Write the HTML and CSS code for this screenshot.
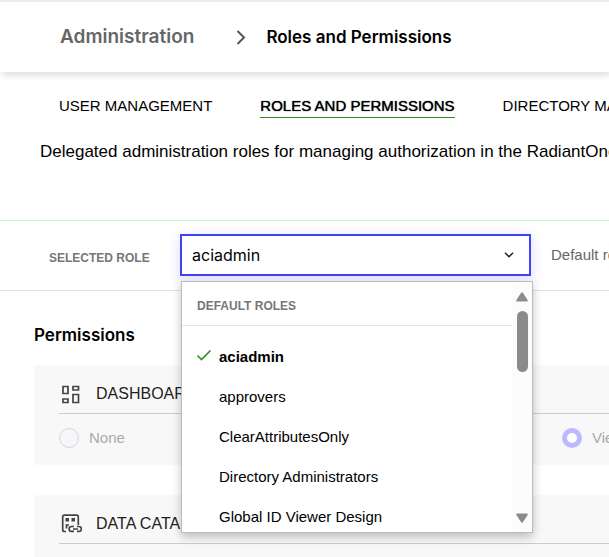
FILE: index.html
```html
<!DOCTYPE html>
<html lang="en">
<head>
<meta charset="utf-8">
<meta name="viewport" content="width=device-width, initial-scale=1">
<title>Roles and Permissions</title>
<link rel="stylesheet" href="styles.css">
</head>
<body>
<header class="topbar">
  <nav class="crumbs" aria-label="Breadcrumb">
    <a class="crumb-parent" href="#admin">Administration</a>
    <svg class="crumb-arrow" viewBox="0 0 10 16" aria-hidden="true"><path d="M1.500 2 8 8.500 1.500 15"/></svg>
    <h1 class="crumb-current">Roles and Permissions</h1>
  </nav>
</header>

<nav class="tabs" aria-label="Administration sections">
  <a class="tab" href="#users">USER MANAGEMENT</a>
  <a class="tab active" href="#roles" aria-current="page">ROLES AND PERMISSIONS</a>
  <a class="tab" href="#directory">DIRECTORY MANAGER</a>
</nav>

<main>
  <p class="intro">Delegated administration roles for managing authorization in the RadiantOne</p>

  <section class="role-bar">
    <label class="role-label" for="role">SELECTED ROLE</label>
    <div class="picker">
      <select class="picker-box" id="role">
        <option>aciadmin</option>
        <option>approvers</option>
        <option>ClearAttributesOnly</option>
        <option>Directory Administrators</option>
        <option>Global ID Viewer Design</option>
      </select>
      <svg class="picker-arrow" viewBox="0 0 10 6" aria-hidden="true"><path d="M1 .8 5 4.800 9 .8"/></svg>
      <div class="menu">
        <div class="menu-content">
          <h2 class="menu-title">DEFAULT ROLES</h2>
          <ul class="options">
            <li class="option selected"><svg class="check" viewBox="0 0 16 12" aria-hidden="true"><path d="M1.500 6.500 5.500 10.500 14.500 1.500"/></svg>aciadmin</li>
            <li class="option">approvers</li>
            <li class="option">ClearAttributesOnly</li>
            <li class="option">Directory Administrators</li>
            <li class="option">Global ID Viewer Design</li>
          </ul>
        </div>
        <div class="scrollbar" aria-hidden="true">
          <svg class="scroll-arrow" viewBox="0 0 12 10"><path d="M6 1.200 10.800 8.500H1.200Z"/></svg>
          <div class="thumb"></div>
          <svg class="scroll-arrow" viewBox="0 0 12 10"><path d="M6 8.800 10.800 1.500H1.200Z"/></svg>
        </div>
      </div>
    </div>
    <p class="role-note">Default role</p>
  </section>

  <section class="permissions">
    <h2 class="section-title">Permissions</h2>
    <fieldset class="card">
      <div class="card-head">
        <svg class="card-icon" viewBox="0 0 22 20" aria-hidden="true"><path d="M3 2.500h5v7H3zM13 2.500h5.500v3.500H13zM3 15h5v3.500H3zM13 10.500h5.500v8H13z"/></svg>
        <h3 class="card-title">DASHBOARD</h3>
      </div>
      <div class="choices">
        <label class="choice"><input class="radio" type="radio" name="dashboard" disabled>None</label>
        <label class="choice"><input class="radio" type="radio" name="dashboard" checked disabled>View</label>
      </div>
    </fieldset>
    <fieldset class="card">
      <div class="card-head">
        <svg class="card-icon" viewBox="0 0 22 20" aria-hidden="true"><path d="M6 17.500H4.500q-1.800 0-1.800-1.800V3q0-1.800 1.800-1.800h12q1.800 0 1.800 1.800v8M6.500 14.500v-3.500h2.500M14 12.500h-2.500a2.400 2.400 0 0 0 0 4.800H14M17 12.500h2a2.400 2.400 0 0 1 0 4.800h-2M13 15h5"/><path class="solid" d="M5.500 4h3.500v3.500H5.500zM11.500 4H15v3.500h-3.500z"/></svg>
        <h3 class="card-title">DATA CATALOG</h3>
      </div>
      <div class="choices">
        <label class="choice"><input class="radio" type="radio" name="catalog" disabled>None</label>
        <label class="choice"><input class="radio" type="radio" name="catalog" checked disabled>View</label>
      </div>
    </fieldset>
  </section>
</main>
</body>
</html>
```
FILE: styles.css
```css
* { box-sizing: border-box; }

html { overflow: hidden; }

body {
  margin: 0;
  background: #fff;
  color: #000;
  font-family: "Liberation Sans", Arial, sans-serif;
  font-size: 15px;
  line-height: 20px;
}

h1, h2, h3, p, ul { margin: 0; }

a { color: inherit; text-decoration: none; }

.topbar {
  padding: 23px 60px;
  border-top: 2px solid #ececec;
  box-shadow: 2px 3px 7px rgba(0, 0, 0, .14);
}

.crumbs {
  display: flex;
  align-items: center;
  height: 24px;
}

.crumb-parent {
  color: #666;
  font-family: Inter, sans-serif;
  font-size: 19px;
  font-weight: 600;
}

.crumb-arrow {
  width: 10px;
  height: 16px;
  margin: 0 20px 0 42px;
  fill: none;
  stroke: #555;
  stroke-width: 2;
}

.crumb-current {
  font-family: Inter, sans-serif;
  font-size: 17px;
  font-weight: 600;
}

.tabs {
  display: flex;
  gap: 48px;
  padding: 23px 0 0 59px;
  white-space: nowrap;
}

.tab {
  padding-bottom: 1px;
  border-bottom: 1px solid transparent;
  line-height: 21px;
}

.tab.active {
  border-color: #2f8a1f;
  text-shadow: 0 0 1px #000;
}

.intro {
  padding: 24px 0 58px 40px;
  overflow: hidden;
  font-size: 17px;
  white-space: nowrap;
}

.role-bar {
  display: flex;
  align-items: flex-start;
  height: 71px;
  padding-top: 13px;
  border-top: 1px solid #cdf2cb;
  border-bottom: 1px solid #e2e2dc;
  line-height: 42px;
  white-space: nowrap;
}

.role-label {
  flex: 0 0 180px;
  padding: 3px 0 0 49px;
  color: #777;
  font-size: 12px;
  font-weight: 700;
}

.picker {
  position: relative;
  flex: 0 0 351px;
}

.picker-box {
  display: block;
  width: 100%;
  height: 42px;
  padding: 0 10px;
  appearance: none;
  border: 2px solid #4141f5;
  border-radius: 0;
  outline: none;
  background: #fff;
  box-shadow: 0 3px 10px 2px rgba(65, 65, 245, .14);
  color: #000;
  font-family: Inter, sans-serif;
  font-size: 16px;
}

.picker-arrow {
  position: absolute;
  top: 18px;
  right: 17px;
  width: 10px;
  height: 6px;
  fill: none;
  stroke: #222;
  stroke-width: 1.500;
  pointer-events: none;
}

.menu {
  position: absolute;
  z-index: 1;
  top: 47px;
  left: 1px;
  display: flex;
  width: 352px;
  height: 252px;
  border: 1px solid #bcbcbc;
  background: #fff;
  box-shadow: 0 4px 9px rgba(0, 0, 0, .24);
}

.menu-content { flex: 1; overflow: hidden; }

.menu-title {
  padding: 14px 15px 9px;
  border-bottom: 1px solid #e5e5e0;
  color: #777;
  font-size: 12px;
  font-weight: 700;
  line-height: 20px;
}

.options {
  padding: 11px 0 0;
  list-style: none;
}

.option {
  position: relative;
  padding-left: 37px;
  line-height: 40px;
}

.option.selected { font-weight: 700; }

.check {
  position: absolute;
  top: 12px;
  left: 14px;
  width: 16px;
  height: 12px;
  fill: none;
  stroke: #2f9120;
  stroke-width: 1.600;
}

.scrollbar {
  display: flex;
  flex: 0 0 20px;
  flex-direction: column;
  align-items: center;
  padding: 10px 0 9px;
  background: #fcfcfc;
}

.scroll-arrow {
  width: 14px;
  height: 10px;
  fill: #8b8b8b;
  stroke: #8b8b8b;
  stroke-width: 2;
  stroke-linejoin: round;
}

.thumb {
  width: 11px;
  height: 61px;
  margin: 9px 0 auto;
  border-radius: 6px;
  background: #8b8b8b;
}

.role-note { padding-left: 20px; color: #666; }

.permissions { padding: 34px 0 0 34px; }

.section-title {
  margin-bottom: 20px;
  font-family: Inter, sans-serif;
  font-size: 17px;
  font-weight: 600;
}

.card {
  height: 100px;
  margin: 0 0 30px;
  padding: 19px 0 0 25px;
  border: 0;
  border-radius: 4px 0 0 4px;
  background: #f8f8f8;
}

.card-head {
  display: flex;
  align-items: center;
  gap: 14px;
  height: 30px;
  padding-left: 1px;
  padding-bottom: 9px;
  border-bottom: 1px solid #ccc;
}

.card-icon {
  width: 22px;
  height: 20px;
  fill: none;
  stroke: #444;
  stroke-width: 1.700;
}

.solid { fill: #444; stroke: none; }

.card-title {
  color: #222;
  font-size: 16px;
  font-weight: 400;
}

.choices {
  display: grid;
  grid-template-columns: 503px auto;
  padding-top: 14px;
  color: #aaa;
  white-space: nowrap;
}

.choice {
  display: flex;
  align-items: center;
  gap: 10px;
}

.radio {
  flex: none;
  width: 20px;
  height: 20px;
  margin: 0;
  appearance: none;
  border: 1px solid #d5d7de;
  border-radius: 50%;
  background: #f5f6fb;
}

.radio:checked { border: 5px solid #bcb9ff; background: #fff; }
```
